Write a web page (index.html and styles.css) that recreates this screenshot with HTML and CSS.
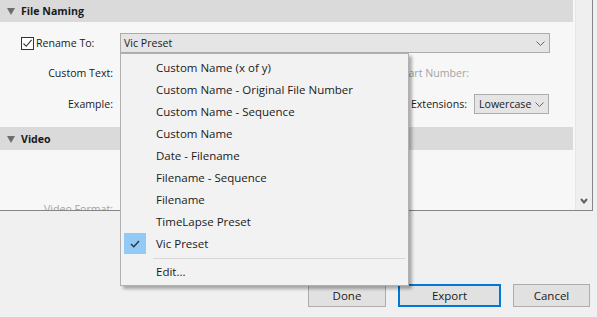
FILE: index.html
```html
<!DOCTYPE HTML>
<html>
<head>
<meta charset="utf-8">
<title>Export</title>
<link rel="stylesheet" href="styles.css">
</head>
<body>
	<div class="window">
		<div class="panel">
			<div class="content">
				<div class="section-head">
					<svg class="twisty" width="8" height="7" viewBox="0 0 8 7"><polygon points="0,0 8,0 4,7" fill="#6e6e6e"/></svg>
					File Naming
				</div>
				<div class="rename-row">
					<label class="check">
						<span class="box"><svg width="11" height="11" viewBox="0 0 11 11"><path d="M1.5 5.5 L4.2 8.3 L9.6 1.8" fill="none" stroke="#333" stroke-width="1.1"/></svg></span>
						Rename To:
					</label>
					<div class="select wide">Vic Preset<svg class="chev" width="9" height="5" viewBox="0 0 9 5"><path d="M0.5 0.5 L4.5 4.5 L8.5 0.5" fill="none" stroke="#666"/></svg></div>
				</div>
				<div class="form-row">
					<span class="label">Custom Text:</span>
					<span></span>
					<span class="label off">Start Number:</span>
					<span></span>
				</div>
				<div class="form-row">
					<span class="label">Example:</span>
					<span></span>
					<span class="label">Extensions:</span>
					<div class="select small">Lowercase<svg class="chev" width="9" height="5" viewBox="0 0 9 5"><path d="M0.5 0.5 L4.5 4.5 L8.5 0.5" fill="none" stroke="#666"/></svg></div>
				</div>
				<div class="section-head video">
					<svg class="twisty" width="8" height="7" viewBox="0 0 8 7"><polygon points="0,0 8,0 4,7" fill="#6e6e6e"/></svg>
					Video
				</div>
				<div class="video-body">
					<span class="label off">Video Format:</span>
				</div>
			</div>
			<div class="scrollbar">
				<svg width="8" height="6" viewBox="0 0 8 6"><path d="M1 1 L4 4.5 L7 1" fill="none" stroke="#606060" stroke-width="2"/></svg>
			</div>
		</div>
		<div class="footer">
			<button class="btn done">Done</button>
			<button class="btn export">Export</button>
			<button class="btn cancel">Cancel</button>
		</div>

		<!-- dropdown open over the form -->
		<div class="menu">
			<ul>
				<li>Custom Name (x of y)</li>
				<li>Custom Name - Original File Number</li>
				<li>Custom Name - Sequence</li>
				<li>Custom Name</li>
				<li>Date - Filename</li>
				<li>Filename - Sequence</li>
				<li>Filename</li>
				<li>TimeLapse Preset</li>
				<li class="ac"><span class="mark"><svg width="10" height="8" viewBox="0 0 10 8"><path d="M1 4 L3.8 6.8 L9 1" fill="none" stroke="#333" stroke-width="1.4"/></svg></span>Vic Preset</li>
			</ul>
			<div class="sep"></div>
			<ul>
				<li>Edit...</li>
			</ul>
		</div>
	</div>
</body>
</html>
```

FILE: styles.css
```css
* {margin:0; padding:0; box-sizing:border-box;}
li {list-style:none;}
body {background:#f0f0f0; font-family:"Open Sans","Noto Sans",sans-serif; font-size:10.6px; color:#1a1a1a; width:597px; height:317px; overflow:hidden;}
.window {position:relative; width:597px; height:317px;}

.panel {display:flex; width:593px; height:211px; border-right:1px solid #858585; border-bottom:1px solid #858585;}
.content {width:575px; background:#f7f7f7; overflow:hidden; display:flex; flex-direction:column;}
.scrollbar {width:17px; background:#efefef; border-left:1px solid #e6e6e6; display:flex; align-items:flex-end; justify-content:center; padding-bottom:6px;}

.section-head {height:22px; background:#dadada; display:flex; align-items:center; font-weight:bold; padding-left:7px; width:573px;}
.section-head .twisty {margin-right:6px; margin-top:1px;}
.section-head.video {height:23px; margin-top:13px;}

.rename-row {display:flex; align-items:center; height:20px; margin-top:11px; padding-left:21px;}
.check {display:flex; align-items:center; width:99px;}
.check .box {width:13px; height:13px; border:1px solid #333; background:#fff; display:flex; align-items:center; justify-content:center; margin-right:2px;}

.select {height:20px; background:#e5e5e5; border:1px solid #acacac; display:flex; align-items:center; justify-content:space-between; padding:0 4px 0 3px;}
.select.wide {width:430px;}
.select.small {width:75px; padding-left:4px;}

.form-row {display:grid; grid-template-columns:113px 1fr auto 75px; column-gap:7px; height:20px; align-items:center; margin-top:10px; padding-right:26px;}
.form-row + .form-row {margin-top:11px;}
.label {text-align:right; white-space:nowrap;}
.label.off {color:#a3a3a3;}
.form-row .label.off {margin-right:-2px;}

.video-body {height:60px; padding-top:51px; width:113px;}
.video-body .label {display:block; line-height:16px;}

.footer {display:flex; justify-content:flex-end; gap:12px; padding:73px 7px 0 0;}
.btn {height:23px; background:#e1e1e1; border:1px solid #adadad; font:inherit; font-size:11.5px; color:#1a1a1a;}
.done {width:78px;}
.export {width:103px; border:2px solid #0078d7;}
.cancel {width:77px;}

.menu {position:absolute; left:120px; top:53px; width:289px; height:233px; background:#f2f2f2; border:1px solid #b0b0b0; padding:3px 3px 2px 2px; box-shadow:3px 3px 3px rgba(0,0,0,0.3);}
.menu li {height:22px; line-height:22px; padding-left:33px; position:relative; font-size:11.5px;}
.menu .mark {position:absolute; left:1px; top:0; width:22px; height:21px; background:#91c9f7; display:flex; align-items:center; justify-content:center;}
.sep {height:1px; background:#d7d7d7; margin:3px 0 2px 30px;}
```
